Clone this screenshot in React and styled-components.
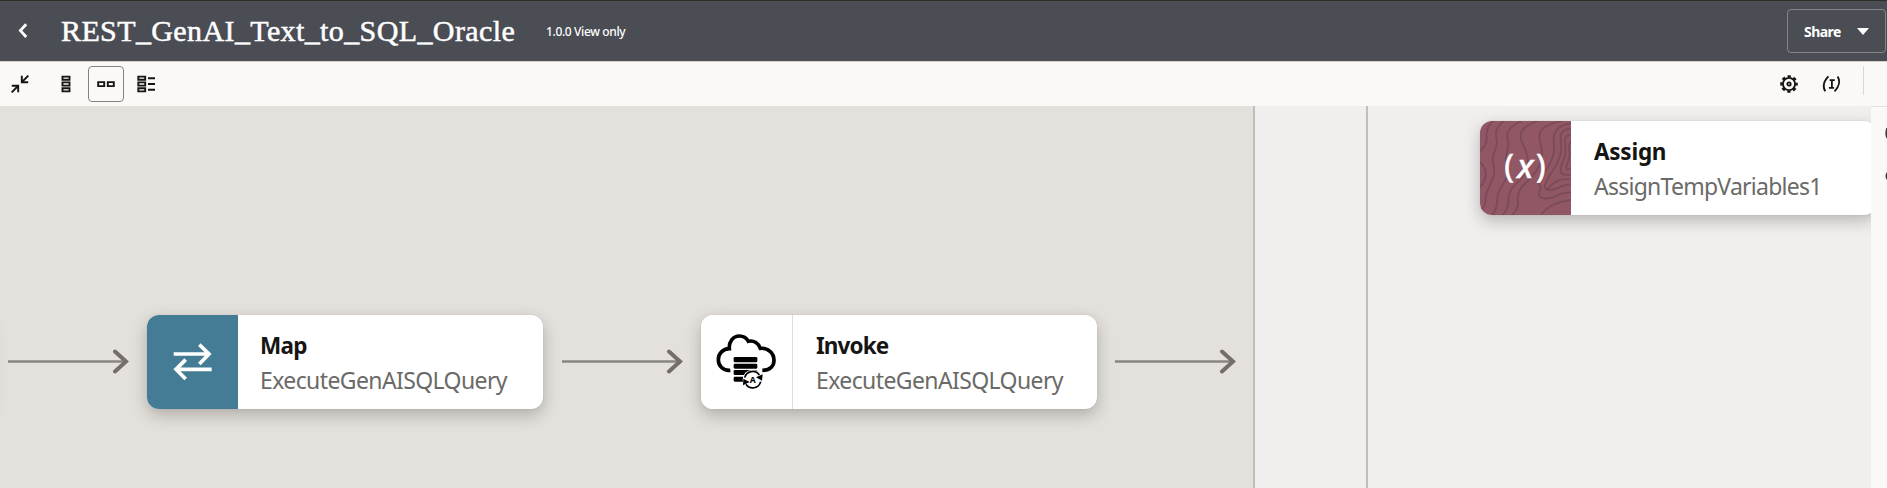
import React from "react";
import styled, { createGlobalStyle } from "styled-components";

const Global = createGlobalStyle`
  *, *::before, *::after { box-sizing: border-box; }
  html, body { margin: 0; overflow: hidden; }
  body { font-family: "Noto Sans", "Open Sans", sans-serif; color: #161513; }
  svg { display: block; flex: none; }
`;

const Page = styled.div`
  display: flex;
  flex-direction: column;
  width: 1887px;
  height: 488px;
  overflow: hidden;
  background: #f0efed;
`;

const Header = styled.header`
  display: flex;
  align-items: center;
  flex: none;
  height: 61px;
  padding: 0 1px 0 14px;
  border-top: 1px solid #312d2a;
  background: #4b4d55;
  color: #fff;
`;

const BackButton = styled.button`
  display: flex;
  padding: 0;
  border: 0;
  background: none;
`;

const Title = styled.h1`
  margin: 0 0 0 29px;
  width: 454px;
  font: 400 30px/40px "Liberation Serif", serif;
  letter-spacing: 0.39px;
  white-space: nowrap;
  -webkit-text-stroke: 0.5px #fff;
`;

const Version = styled.span`
  margin-left: 31px;
  font-size: 12px;
  font-weight: 500;
  letter-spacing: -0.36px;
  white-space: nowrap;
`;

const ShareButton = styled.button`
  display: flex;
  align-items: center;
  justify-content: space-between;
  width: 99px;
  height: 44px;
  margin-left: auto;
  padding: 0 16px 0 16px;
  border: 1px solid #85868b;
  border-radius: 4px;
  background: none;
  color: #fff;
  font: 700 14px "Noto Sans", sans-serif;
  letter-spacing: -0.55px;
`;

const Toolbar = styled.div`
  display: flex;
  align-items: flex-start;
  justify-content: space-between;
  flex: none;
  height: 45px;
  padding: 4px 23px 0 2px;
  border-top: 1px solid #d5d2c5;
  background: #fbf9f8;
`;

const ToolGroup = styled.div`
  display: flex;
  gap: ${(p) => p.$gap || 0}px;
`;

const Tool = styled.button`
  display: flex;
  align-items: center;
  justify-content: center;
  width: 36px;
  height: 36px;
  padding: 0;
  margin-left: ${(p) => p.$offset || 0}px;
  border: 1px solid ${(p) => (p.$selected ? "#858381" : "transparent")};
  border-radius: 4px;
  background: none;
  color: #161513;
`;

const Divider = styled.span`
  width: 1px;
  height: 29px;
  margin-left: 6px;
  background: #dad8d5;
`;

const Workspace = styled.main`
  display: flex;
  flex: 1;
  min-height: 0;
`;

const Canvas = styled.div`
  position: relative;
  display: flex;
  flex: 1;
  overflow: hidden;
`;

const Lane = styled.div`
  flex: none;
  width: ${(p) => p.$width}px;
  border-right: 2px solid #c1bdb9;
  background: ${(p) => p.$color};
`;

const SidePanel = styled.aside`
  display: flex;
  flex-direction: column;
  align-items: flex-end;
  flex: none;
  width: 16px;
  padding-top: 18px;
  border-top: 1px solid #e4e2e0;
  background: #fbf9f8;
`;

const Node = styled.article`
  position: absolute;
  left: ${(p) => p.$x}px;
  top: ${(p) => p.$y}px;
  display: flex;
  width: 396px;
  height: 94px;
  overflow: hidden;
  border-radius: 12px;
  background: #fff;
  box-shadow: 0 6px 16px rgba(22, 21, 19, 0.25), 0 0 2px rgba(22, 21, 19, 0.08);
`;

const NodeIcon = styled.div`
  flex: none;
  width: ${(p) => (p.$divided ? 92 : 91)}px;
  border-right: ${(p) => (p.$divided ? "1px solid #dedddb" : "0")};
  background: ${(p) => p.$color};
`;

const NodeText = styled.div`
  padding: 14px 0 0 ${(p) => p.$inset || 22}px;
  white-space: nowrap;
`;

const NodeTitle = styled.h2`
  margin: 0;
  font-size: 22.5px;
  font-weight: 700;
  line-height: 34px;
  letter-spacing: ${(p) => p.$track}px;
`;

const NodeName = styled.p`
  margin: 0;
  color: #6b6a68;
  font-size: 23px;
  line-height: 34px;
  letter-spacing: ${(p) => p.$track}px;
`;

const Connector = styled.svg`
  position: absolute;
  left: ${(p) => p.$x}px;
  top: 243px;
`;

const BackIcon = () => (
  <svg width="18" height="18" viewBox="0 0 18 18" fill="none" stroke="#fff" strokeWidth="2.8">
    <path d="M12.2 2.2 6.4 8.6l5.8 6.4" />
  </svg>
);

const CollapseIcon = () => (
  <svg width="18" height="18" viewBox="0 0 18 18" fill="none" stroke="currentColor" strokeWidth="1.9">
    <path d="M17.4.6 11 7M10.8.8v6.4h6.4M.6 17.4 7 11M.8 10.8h6.4v6.4" />
  </svg>
);

const VerticalIcon = () => (
  <svg width="18" height="18" viewBox="0 0 18 18" fill="none" stroke="currentColor" strokeWidth="1.9">
    <path d="M5.5 1.6h7v3.2h-7zM5.5 7.4h7v3.2h-7zM5.5 13.2h7v3.2h-7z" />
  </svg>
);

const HorizontalIcon = () => (
  <svg width="18" height="18" viewBox="0 0 18 18" fill="none" stroke="currentColor" strokeWidth="1.9">
    <path d="M1.2 7.1h6v4h-6zM10.8 7.1h6v4h-6z" />
  </svg>
);

const DetailIcon = () => (
  <svg width="18" height="18" viewBox="0 0 18 18" fill="none" stroke="currentColor" strokeWidth="1.9">
    <path d="M1.3 1.6h6.9v3.2H1.3zM1.3 7.4h6.9v3.2H1.3zM1.3 13.2h6.9v3.2H1.3zM11 3.2h7M11 9h7M11 14.8h7" />
  </svg>
);

const GearIcon = () => (
  <svg width="18" height="18" viewBox="0 0 18 18" fill="none" stroke="currentColor">
    <circle cx="9" cy="9" r="6.1" strokeWidth="1.9" />
    <circle cx="9" cy="9" r="7.6" strokeWidth="2.4" strokeDasharray="3.3 2.67" strokeDashoffset="1.65" />
    <circle cx="9" cy="9" r="1.7" strokeWidth="1.8" />
  </svg>
);

const VariableIcon = () => (
  <svg width="20" height="20" viewBox="0 0 20 20" fill="none" stroke="currentColor" strokeWidth="1.9">
    <path d="M6.4 2.4C1.6 7.4.8 13 3.2 17.3M15.6 2.4c2.6 4.1 1.8 9.9-3 14.9" />
    <path d="M7.6 6.2h5.2M6.9 13.9h5.2M9.9 6.2v7.7" strokeWidth="1.8" />
  </svg>
);

const MapIcon = () => (
  <svg width="91" height="94" viewBox="441 44 273 282" fill="none" stroke="#fff" strokeWidth="11">
    <path d="M521 161h105M598 133l29 28-29 30M635 207H529M557 178l-29 29 29 29" />
  </svg>
);

const InvokeIcon = () => (
  <svg width="91" height="94" viewBox="63 44 273 282">
    <path
      d="M151 210C129 212 115 196 115 178c0-19 14-32 33-33-2-20 11-38 30-38 13 0 22 7 27 16 17-4 31 6 36 21 23-2 41 14 41 36 0 18-13 30-35 30"
      fill="none"
      stroke="#000"
      strokeWidth="11"
    />
    <rect x="161" y="170" width="71" height="16" rx="4" />
    <rect x="161" y="190" width="71" height="15" rx="4" />
    <rect x="161" y="209" width="71" height="15" rx="4" />
    <rect x="161" y="229" width="60" height="15" rx="4" />
    <circle cx="218" cy="238" r="30" fill="#fff" />
    <g fill="none" stroke="#000" strokeWidth="5">
      <path d="M194 232a24.5 24.5 0 0 1 44-8M242 244a24.5 24.5 0 0 1-44 8" />
    </g>
    <path d="m248 222-2 19-18-10zM189 255l1-20 19 10z" />
    <text x="218" y="247" textAnchor="middle" fontFamily="Noto Sans, sans-serif" fontWeight="700" fontSize="26">A</text>
  </svg>
);

const AssignIcon = () => (
  <svg width="91" height="94" viewBox="61 61 273 282">
    <g fill="none" stroke="#6d4350" strokeOpacity=".62" strokeWidth="5.5">
      <path d="M100 60C82 80 79 92 81 112c2 17-8 27-20 40" />
      <path d="M133 60c-25 20-27 35-22 58 4 21-8 32-11 49-4 20 8 35 2 58-6 28-23 42-24 67 0 19-4 27-15 38" />
      <path d="M61 184c16 13 21 35 13 55-4 13-10 17-13 21" />
      <path d="M187 60c-38 18-50 35-42 61 6 22-10 37-6 61 5 27 9 41-5 62-13 20-22 34-21 56 0 19-7 31-16 45" />
      <path d="M235 60c-44 17-60 34-49 62 12 29 21 43 18 66-4 30-17 45-34 60-20 18-25 35-24 56 0 17-7 29-18 41" />
      <path d="M310 60c-50 11-72 24-71 49 2 27 13 40 7 66-6 30-28 54-51 75-22 20-22 40-20 55 2 15-7 27-18 40" />
      <path d="M334 68c-30 3-44 13-50 32-7 26 5 42-5 68-7 21-15 35-29 52-15 20-12 32-8 39 5 9-8 18-3 27 6 9 25 10 42 3 23-10 33-14 53-13" />
      <path d="M334 85c-22 0-32 9-31 29 1 21 5 36-3 56-8 24-19 35-29 54-15 25-22 36-8 43 20 8 43-18 71-16" />
      <path d="M334 101c-15 1-20 14-18 28 4 27-1 41-8 58-9 20-6 33 6 35 8 2 11 1 20 1M334 121c-6 7-7 17-5 30 3 18-2 32-8 43-5 12 4 15 13 10M263 268c19-30 43-34 71-32M244 342c22-27 43-36 90-44" />
    </g>
    <g fill="#fff" stroke="#fff" fontFamily="Noto Sans, sans-serif">
      <text x="134" y="232" fontSize="96" strokeWidth="1.5">(</text>
      <text x="197" y="231" fontSize="100" fontStyle="italic" fontWeight="500" strokeWidth="1" textAnchor="middle">x</text>
      <text x="229" y="232" fontSize="96" strokeWidth="1.5">)</text>
    </g>
  </svg>
);

const Arrow = ({ x }) => (
  <Connector $x={x} width="122" height="26" viewBox="0 0 122 26" fill="none">
    <path d="M0 12.5h118" stroke="#8a8682" strokeWidth="2.5" />
    <path d="M107 2.5 118 12.5l-11 10" stroke="#736e69" strokeWidth="4" strokeLinecap="round" />
  </Connector>
);

const FlowNode = ({ x, y, color, divided, inset, icon, title, titleTrack = 0, name, nameTrack = 0 }) => (
  <Node $x={x} $y={y}>
    <NodeIcon $color={color} $divided={divided}>{icon}</NodeIcon>
    <NodeText $inset={inset}>
      <NodeTitle $track={titleTrack}>{title}</NodeTitle>
      <NodeName $track={nameTrack}>{name}</NodeName>
    </NodeText>
  </Node>
);

export default function App() {
  return (
    <Page>
      <Global />
      <Header>
        <BackButton aria-label="Back"><BackIcon /></BackButton>
        <Title>REST_GenAI_Text_to_SQL_Oracle</Title>
        <Version>1.0.0 View only</Version>
        <ShareButton>
          Share
          <svg width="12" height="7" viewBox="0 0 12 7" fill="#fff"><path d="M0 0h12L6 7z" /></svg>
        </ShareButton>
      </Header>
      <Toolbar>
        <ToolGroup $gap={4}>
          <Tool aria-label="Collapse"><CollapseIcon /></Tool>
          <Tool aria-label="Vertical layout" $offset={6}><VerticalIcon /></Tool>
          <Tool aria-label="Horizontal layout" $selected><HorizontalIcon /></Tool>
          <Tool aria-label="Detail layout"><DetailIcon /></Tool>
        </ToolGroup>
        <ToolGroup $gap={7}>
          <Tool aria-label="Settings"><GearIcon /></Tool>
          <Tool aria-label="Variables"><VariableIcon /></Tool>
          <Divider />
        </ToolGroup>
      </Toolbar>
      <Workspace>
        <Canvas>
          <Lane $width={1255} $color="#e4e1dc" />
          <Lane $width={113} $color="#f0efed" />
          <Node $x={-407} $y={209} />
          <Arrow x={8} />
          <FlowNode x={147} y={209} color="#457c95" icon={<MapIcon />} title="Map" titleTrack={-0.7} name="ExecuteGenAISQLQuery" nameTrack={-0.6} />
          <Arrow x={561.5} />
          <FlowNode x={701} y={209} color="#fff" divided inset={23} icon={<InvokeIcon />} title="Invoke" titleTrack={-0.9} name="ExecuteGenAISQLQuery" nameTrack={-0.6} />
          <Arrow x={1115} />
          <FlowNode x={1480} y={15} color="#915765" inset={23} icon={<AssignIcon />} title="Assign" titleTrack={-0.25} name="AssignTempVariables1" nameTrack={-0.75} />
        </Canvas>
        <SidePanel>
          <svg width="2" height="60" viewBox="0 0 2 60" fill="none" stroke="#3f3d3a" strokeWidth="1.8">
            <path d="M2.2 3C1 6 1 10 2.2 13M2.2 48c-1 2-1 4 0 6" />
          </svg>
        </SidePanel>
      </Workspace>
    </Page>
  );
}
